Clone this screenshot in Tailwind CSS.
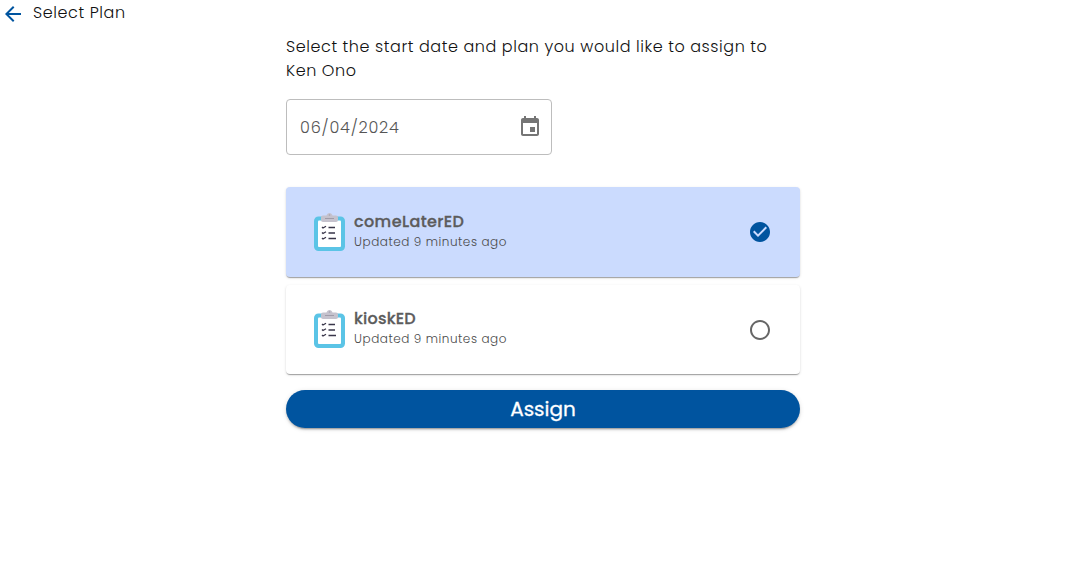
<!DOCTYPE html>
<html lang="en">
<head>
<meta charset="utf-8">
<title>Select Plan</title>
<script src="https://cdn.jsdelivr.net/npm/@tailwindcss/browser@4"></script>
</head>
<body class="min-h-screen bg-white font-[Poppins,Inter,sans-serif] text-[#111]">
<svg class="hidden">
  <symbol id="clipboard" viewBox="0 0 32 39">
    <rect x="0" y="3.500" width="31" height="34.500" rx="4.500" fill="#5bc4e6"/>
    <rect x="4" y="7.500" width="23" height="26.500" rx="1" fill="#fff"/>
    <path d="M9 2.500h3.500C13 1 14 0 15.500 0S18 1 18.500 2.500H22a2 2 0 0 1 2 2v2.500a2 2 0 0 1-2 2H9a2 2 0 0 1-2-2V4.500a2 2 0 0 1 2-2Z" fill="#c5c2cd"/>
    <circle cx="15.500" cy="2" r=".8" fill="#a5a1ae"/>
    <path d="M11 5.500h9" stroke="#a09ca9" stroke-width="1"/>
    <path d="M8 14l1 1 3-1.800M8 19.500l1 1 3-1.800M8 25l1 1 3-1.800M14.500 14.500h6.500M14.500 20h6.500M14.500 25.500h7.500" fill="none" stroke="#39364a" stroke-width="1.300"/>
  </symbol>
</svg>
<header class="flex h-6 items-center">
  <svg class="mt-1 ml-[1px] size-6 shrink-0" viewBox="0 0 24 24" fill="#00549f"><path d="M20 11H7.830l5.590-5.590L12 4l-8 8 8 8 1.410-1.410L7.830 13H20v-2z"/></svg>
  <h1 class="mt-0.5 ml-2 whitespace-nowrap text-base font-light tracking-[0.58px]">Select Plan</h1>
</header>
<main class="ml-[286px] w-[514px] pt-[11px]">
  <p class="text-base font-light leading-6"><span class="whitespace-nowrap tracking-[0.57px]">Select the start date and plan you would like to assign to</span><br><span class="tracking-[0.57px]">Ken Ono</span></p>
  <div class="mt-4 flex h-14 w-[266px] items-center justify-between rounded border border-[#bdbdbd] pr-[9px] pl-[13px] text-[#555]">
    <span class="pt-0.5 text-base font-light tracking-[0.8px]">06/04/2024</span>
    <svg class="size-6" viewBox="0 0 24 24" fill="#757575"><path d="M17 12h-5v5h5v-5zM16 1v2H8V1H6v2H5c-1.110 0-1.990.9-1.990 2L3 19c0 1.100.89 2 2 2h14c1.100 0 2-.9 2-2V5c0-1.100-.9-2-2-2h-1V1h-2zm3 18H5V8h14v11z"/></svg>
  </div>
  <section class="mt-8 flex h-[90px] items-center rounded bg-[#cbdbfe] pr-7 pl-7 shadow-[0_2px_1px_-1px_rgba(0,0,0,0.2),0_1px_1px_rgba(0,0,0,0.14),0_1px_3px_rgba(0,0,0,0.12)]">
    <svg class="h-[39px] w-8 shrink-0"><use href="#clipboard"/></svg>
    <div class="mb-0.5 ml-2 flex-1 text-[#5c5c5c]">
      <h2 class="h-[22px] text-base font-medium leading-[24px] tracking-[0.4px] [-webkit-text-stroke:0.3px_#5c5c5c]">comeLaterED</h2>
      <p class="text-xs font-light leading-[20px] tracking-[0.55px] text-[#4a4a4a]">Updated 9 minutes ago</p>
    </div>
    <svg class="size-6" viewBox="0 0 24 24" fill="#00549f"><path d="M12 2C6.480 2 2 6.480 2 12s4.480 10 10 10 10-4.480 10-10S17.520 2 12 2zm-2 15l-5-5 1.410-1.410L10 14.170l7.590-7.590L19 8l-9 9z"/></svg>
  </section>
  <section class="mt-2 flex h-[89px] items-center rounded bg-white pr-7 pl-7 shadow-[0_2px_1px_-1px_rgba(0,0,0,0.2),0_1px_1px_rgba(0,0,0,0.14),0_1px_3px_rgba(0,0,0,0.12)]">
    <svg class="mb-px h-[39px] w-8 shrink-0"><use href="#clipboard"/></svg>
    <div class="mb-1 ml-2 flex-1 text-[#5c5c5c]">
      <h2 class="h-[22px] text-base font-medium leading-[24px] tracking-[0.2px] [-webkit-text-stroke:0.3px_#5c5c5c]">kioskED</h2>
      <p class="text-xs font-light leading-[20px] tracking-[0.55px] text-[#4a4a4a]">Updated 9 minutes ago</p>
    </div>
    <svg class="size-6" viewBox="0 0 24 24" fill="#666"><path d="M12 2C6.480 2 2 6.480 2 12s4.480 10 10 10 10-4.480 10-10S17.520 2 12 2zm0 18c-4.420 0-8-3.580-8-8s3.580-8 8-8 8 3.580 8 8-3.580 8-8 8z"/></svg>
  </section>
  <button class="mt-4 flex h-[38px] w-full items-center justify-center rounded-full bg-[#00549f] text-xl font-normal text-white shadow-[0_3px_1px_-2px_rgba(0,0,0,0.2),0_2px_2px_rgba(0,0,0,0.14),0_1px_5px_rgba(0,0,0,0.12)] [-webkit-text-stroke:0.3px_white]">Assign</button>
</main>
</body>
</html>
